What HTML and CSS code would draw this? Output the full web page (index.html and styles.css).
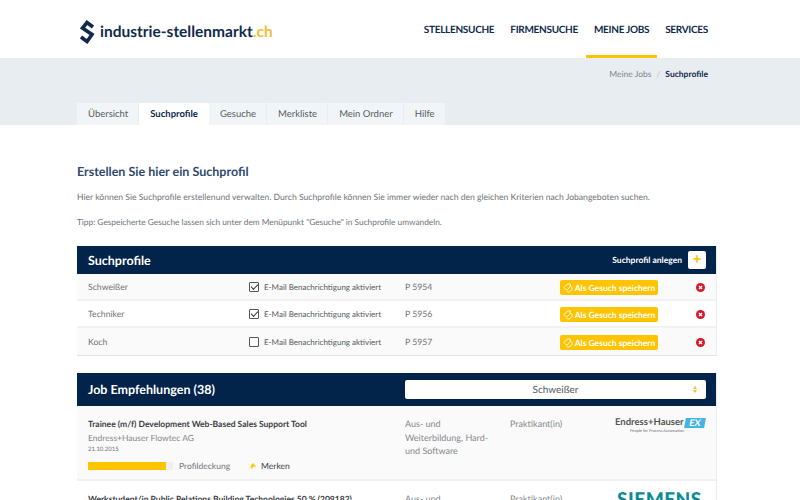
FILE: index.html
```html
<!DOCTYPE html>
<html lang="de">
<head>
    <meta charset="UTF-8">
    <title>Suchprofile</title>
    <link rel="stylesheet" href="styles.css">
</head>
<body>
<div class="page">
    <header class="top">
        <a class="logo">
            <svg class="logo-mark" width="16" height="24" viewBox="0 0 16 24">
                <path fill="none" stroke="#0f2a4d" stroke-width="3.600" d="M14 7L8 2.500 3.500 8 13 14.500 8 21.500 2 17"/>
            </svg>
            <span>industrie-stellenmarkt<em>.ch</em></span>
        </a>
        <nav class="mainnav">
            <a>STELLENSUCHE</a>
            <a>FIRMENSUCHE</a>
            <a class="active">MEINE JOBS</a>
            <a>SERVICES</a>
        </nav>
    </header>

    <div class="band">
        <div class="crumbs"><span>Meine Jobs</span><i>/</i><b>Suchprofile</b></div>
        <ul class="tabs">
            <li>Übersicht</li>
            <li class="active">Suchprofile</li>
            <li>Gesuche</li>
            <li>Merkliste</li>
            <li>Mein Ordner</li>
            <li>Hilfe</li>
        </ul>
    </div>

    <main class="content">
        <h1>Erstellen Sie hier ein Suchprofil</h1>
        <p>Hier können Sie Suchprofile erstellenund verwalten. Durch Suchprofile können Sie immer wieder nach den gleichen Kriterien nach Jobangeboten suchen.</p>
        <p>Tipp: Gespeicherte Gesuche lassen sich unter dem Menüpunkt "Gesuche" in Suchprofile umwandeln.</p>

        <section class="panel">
            <div class="panel-head small">
                <h2>Suchprofile</h2>
                <div class="add">Suchprofil anlegen <span class="plus">+</span></div>
            </div>
            <div class="profile">
                <span>Schweißer</span>
                <label><span class="check on"></span>E-Mail Benachrichtigung aktiviert</label>
                <span>P 5954</span>
                <a class="save"><svg width="10" height="10" viewBox="0 0 11 11"><path fill="none" stroke="#fff" d="M1 5l4-4h3v3l-4 4zM8 3l2 2v2l-3 3H5L4 9"/></svg>Als Gesuch speichern</a>
                <svg class="del" width="9" height="9" viewBox="0 0 9 9"><circle cx="4.500" cy="4.500" r="4.500" fill="#d9152c"/><path stroke="#fff" stroke-width="1.500" d="M3 3l3 3M6 3l-3 3"/></svg>
            </div>
            <div class="profile">
                <span>Techniker</span>
                <label><span class="check on"></span>E-Mail Benachrichtigung aktiviert</label>
                <span>P 5956</span>
                <a class="save"><svg width="10" height="10" viewBox="0 0 11 11"><path fill="none" stroke="#fff" d="M1 5l4-4h3v3l-4 4zM8 3l2 2v2l-3 3H5L4 9"/></svg>Als Gesuch speichern</a>
                <svg class="del" width="9" height="9" viewBox="0 0 9 9"><circle cx="4.500" cy="4.500" r="4.500" fill="#d9152c"/><path stroke="#fff" stroke-width="1.500" d="M3 3l3 3M6 3l-3 3"/></svg>
            </div>
            <div class="profile">
                <span>Koch</span>
                <label><span class="check"></span>E-Mail Benachrichtigung aktiviert</label>
                <span>P 5957</span>
                <a class="save"><svg width="10" height="10" viewBox="0 0 11 11"><path fill="none" stroke="#fff" d="M1 5l4-4h3v3l-4 4zM8 3l2 2v2l-3 3H5L4 9"/></svg>Als Gesuch speichern</a>
                <svg class="del" width="9" height="9" viewBox="0 0 9 9"><circle cx="4.500" cy="4.500" r="4.500" fill="#d9152c"/><path stroke="#fff" stroke-width="1.500" d="M3 3l3 3M6 3l-3 3"/></svg>
            </div>
        </section>

        <section class="panel jobs">
            <div class="panel-head">
                <h2>Job Empfehlungen (38)</h2>
                <div class="select">Schweißer<span class="arrows"></span></div>
            </div>
            <div class="job">
                <div>
                    <h3>Trainee (m/f) Development Web-Based Sales Support Tool</h3>
                    <div class="company">Endress+Hauser Flowtec AG</div>
                    <div class="date">21.10.2015</div>
                    <div class="meta">
                        <span class="bar"><span class="fill" style="width:92%"></span></span>
                        <span class="cover">Profildeckung</span>
                        <svg class="pin" width="9" height="9" viewBox="0 0 13 11"><path fill="#ffc400" d="M0 10l4-4 1-3 3-3 1 3 3 2-3 1-2 0-1 3-2-2z"/></svg>
                        <span class="mark">Merken</span>
                    </div>
                </div>
                <div class="col">Aus- und Weiterbildung, Hard- und Software</div>
                <div class="col">Praktikant(in)</div>
                <div class="eh">
                    <div class="eh-name">Endress+Hauser<span class="ex">EX</span></div>
                    <div class="eh-sub">People for Process Automation</div>
                </div>
            </div>
            <div class="job plain">
                <div>
                    <h3>Werkstudent/in Public Relations Building Technologies 50 % (209182)</h3>
                </div>
                <div class="col">Aus- und Weiterbildung</div>
                <div class="col">Praktikant(in)</div>
                <div class="siemens">SIEMENS</div>
            </div>
        </section>
    </main>
</div>
</body>
</html>
```
FILE: styles.css
```css
* {
    box-sizing: border-box;
}

body {
    margin: 0;
    font-family: Lato, "Liberation Sans", sans-serif;
    color: #6f7478;
    background: #fff;
    text-rendering: geometricPrecision;
}

.page {
    height: 500px;
    overflow: hidden;
}

/* header */
.top {
    height: 58px;
    padding: 0 92px 0 79px;
    display: flex;
    justify-content: space-between;
}

.logo {
    display: flex;
    align-items: center;
    gap: 5px;
    height: 63px;
    font-size: 15.500px;
    font-weight: 700;
    color: #0f2a4d;
}

.logo em {
    font-style: normal;
    color: #f2bd2c;
}

.mainnav {
    display: flex;
    gap: 16px;
}

.mainnav a {
    position: relative;
    padding-top: 24px;
    font-size: 10px;
    font-weight: 700;
    letter-spacing: -0.300px;
    color: #0f2a4d;
}

.mainnav a.active::after {
    content: "";
    position: absolute;
    left: -8px;
    right: -8px;
    top: 55px;
    height: 3px;
    background: #ffc400;
}

/* grey band with tabs */
.band {
    height: 67px;
    background: #e8edf1;
    padding: 11px 92px 0 77px;
    display: flex;
    flex-direction: column;
    justify-content: space-between;
}

.crumbs {
    text-align: right;
    font-size: 8.500px;
    color: #80868b;
}

.crumbs i {
    margin: 0 5px;
    font-style: normal;
    color: #b6bcc1;
}

.crumbs b {
    font-weight: 700;
    color: #0f2a4d;
}

.tabs {
    display: flex;
    margin: 0;
    padding: 0;
    list-style: none;
}

.tabs li {
    height: 22px;
    line-height: 23px;
    padding: 0 11px;
    font-size: 9.500px;
    color: #555b60;
    background: #f2f5f7;
    box-shadow: inset -1px 0 0 #e8edf1;
}

.tabs li.active {
    background: #fff;
    color: #0f2a4d;
    font-weight: 700;
    box-shadow: none;
}

/* content */
.content {
    padding: 38px 83px 0 77px;
}

h1 {
    margin: 0 0 11px;
    font-size: 12.500px;
    line-height: 18px;
    font-weight: 700;
    color: #2f4a70;
}

.content p {
    margin: 0 0 14px;
    font-size: 8.600px;
    line-height: 11px;
    white-space: nowrap;
}

.content p + p {
    font-size: 8.300px;
}

.panel {
    margin-top: 18px;
    border-bottom: 1px solid #e2e2e2;
    border-right: 1px solid #ececec;
}

.panel-head {
    height: 33px;
    padding: 0 11px;
    background: #02234a;
    color: #fff;
    display: flex;
    align-items: center;
    justify-content: space-between;
}

.panel-head.small {
    height: 28px;
    padding-right: 10px;
}

h2 {
    margin: 0;
    font-size: 12.500px;
    font-weight: 700;
}

.add {
    display: flex;
    align-items: center;
    gap: 6px;
    font-size: 8.500px;
    font-weight: 700;
}

.plus {
    width: 18px;
    height: 18px;
    background: #fff;
    color: #ffc400;
    border-radius: 2px;
    font-size: 15px;
    line-height: 17px;
    text-align: center;
}

.profile {
    height: 27px;
    display: grid;
    grid-template-columns: 161px 156px 155px 136px 1fr;
    align-items: center;
    padding-left: 11px;
    font-size: 8.700px;
    border-bottom: 2px solid #f2f2f2;
    background: #fff;
}

.profile:nth-child(even) {
    background: #fafafa;
}

.profile:last-child {
    border-bottom: 0;
}

.profile label {
    display: flex;
    align-items: center;
    gap: 5px;
    font-size: 8px;
    color: #555b60;
}

.check {
    position: relative;
    width: 10px;
    height: 10px;
    border: 1px solid #555;
    border-radius: 1px;
}

.check.on::after {
    content: "";
    position: absolute;
    left: 1px;
    top: 1px;
    width: 6px;
    height: 3px;
    border-left: 1.500px solid #333;
    border-bottom: 1.500px solid #333;
    transform: rotate(-45deg);
}

.save {
    width: 98px;
    height: 15px;
    margin-top: 2px;
    display: flex;
    align-items: center;
    justify-content: center;
    gap: 2px;
    background: #ffc400;
    border-radius: 2px;
    color: #fff;
    font-size: 8.500px;
    font-weight: 700;
    white-space: nowrap;
}

.del {
    margin-top: 2px;
}

.jobs {
    margin-top: 17px;
}

.select {
    position: relative;
    width: 301px;
    height: 19px;
    margin-right: -1px;
    background: #fff;
    border-radius: 2px;
    color: #555b60;
    font-size: 10px;
    line-height: 21px;
    text-align: center;
}

/* up and down arrows of the select */
.arrows {
    position: absolute;
    right: 8px;
    top: 6px;
    width: 5px;
    height: 7px;
}

.arrows::before,
.arrows::after {
    content: "";
    position: absolute;
    left: 0;
    border-left: 2.500px solid transparent;
    border-right: 2.500px solid transparent;
}

.arrows::before {
    top: 0;
    border-bottom: 3px solid #f2c230;
}

.arrows::after {
    bottom: 0;
    border-top: 3px solid #f2c230;
}

.job {
    height: 75px;
    display: grid;
    grid-template-columns: 317px 105px 105px 1fr;
    padding: 11px 11px 0;
    background: #fafafa;
    border-bottom: 2px solid #f0f0f0;
    font-size: 8.500px;
}

.job.plain {
    background: #fff;
}

h3 {
    margin: 0;
    font-size: 8.500px;
    line-height: 14px;
    font-weight: 700;
    color: #3b4044;
    white-space: nowrap;
}

.company {
    line-height: 14px;
    color: #85898d;
}

.date {
    font-size: 6px;
    line-height: 10px;
}

.meta {
    display: flex;
    align-items: center;
    margin-top: 6px;
}

.bar {
    width: 85px;
    height: 8px;
    background: #f0f0f0;
    margin-right: 6px;
}

.fill {
    display: block;
    height: 100%;
    background: #ffc400;
}

.cover {
    margin-right: 18px;
}

.pin {
    margin-right: 4px;
}

.mark {
    color: #3b4044;
}

.col {
    padding-right: 17px;
    font-size: 9px;
    line-height: 13.500px;
    color: #85898d;
}

.eh-name {
    display: flex;
    align-items: center;
    justify-content: space-between;
    font-size: 9.500px;
    font-weight: 700;
    color: #555;
    white-space: nowrap;
}

.ex {
    width: 20px;
    background: #45b4e0;
    color: #fff;
    font-size: 9px;
    line-height: 10px;
    font-weight: 700;
    text-align: center;
    transform: skewX(-10deg);
}

.eh-sub {
    margin-left: 15px;
    font-size: 4px;
    line-height: 6px;
    white-space: nowrap;
}

.siemens {
    margin-top: -4px;
    margin-left: 2px;
    font-size: 19px;
    font-weight: 900;
    letter-spacing: 0.500px;
    color: #0a8c96;
}
```
